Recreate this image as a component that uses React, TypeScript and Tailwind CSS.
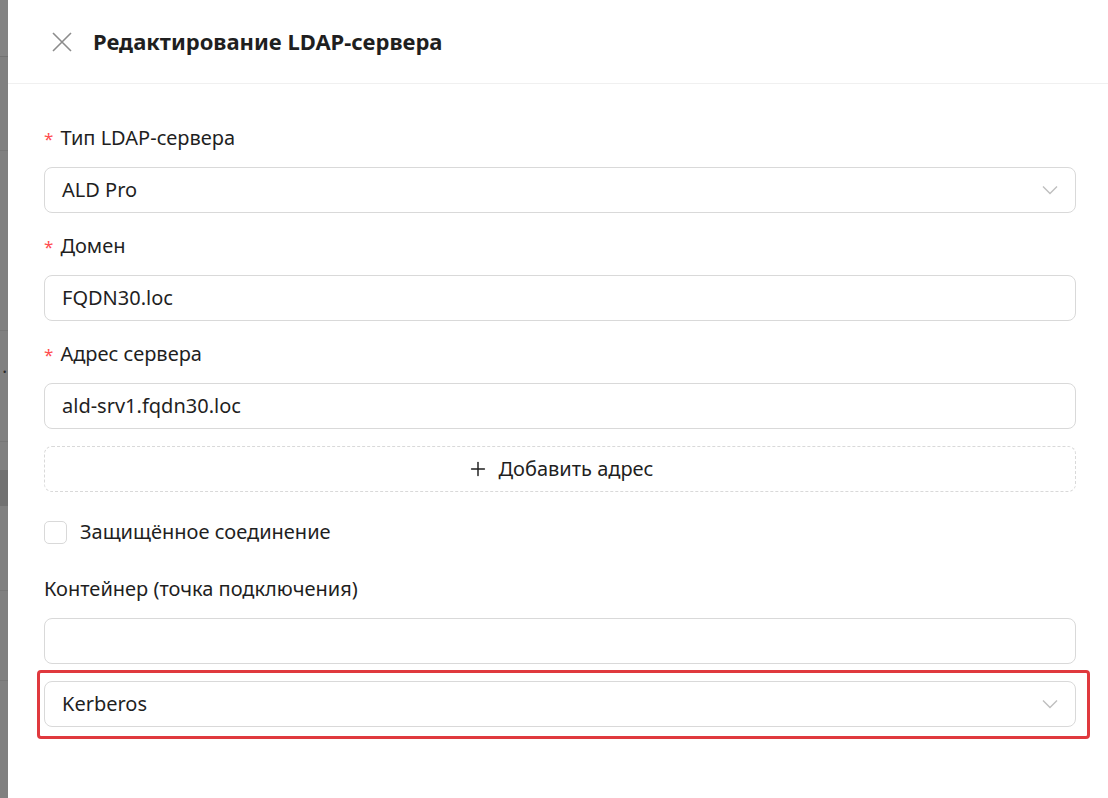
import { Plus } from 'lucide-react';

function Chevron() {
  return (
    <svg width="16" height="10" viewBox="0 0 16 10" fill="none" className="text-[#bfbfbf]">
      <path d="M1 1.5 L8 8.5 L15 1.5" stroke="currentColor" strokeWidth="1.4" />
    </svg>
  );
}

function Label({ text, required }: { text: string; required?: boolean }) {
  return (
    <div className="h-[40px] flex items-center text-[20px] text-[#1f1f1f]">
      {required && <span className="text-[#ff4d4f] mr-[7px] text-[17px] leading-none">*</span>}
      <span>{text}</span>
    </div>
  );
}

function Input({ value, select }: { value?: string; select?: boolean }) {
  return (
    <div className="h-[46px] border border-[#d9d9d9] rounded-[8px] bg-white flex items-center justify-between pl-[17px] pr-[17px] text-[20px] text-[#1f1f1f]">
      <span>{value}</span>
      {select && <Chevron />}
    </div>
  );
}

export default function App() {
  return (
    <div className="w-[1108px] h-[798px] flex overflow-hidden" style={{ fontFamily: '"Noto Sans", "Open Sans", sans-serif' }}>
      {/* masked page behind the drawer */}
      <div className="w-[8px] h-full bg-[#808080] flex flex-col overflow-hidden">
        <div className="h-[56px] bg-[#838383]" />
        <div className="h-[1px] bg-[#727272]" />
        <div className="h-[93px]" />
        <div className="h-[1px] bg-[#777777]" />
        <div className="h-[179px]" />
        <div className="h-[1px] bg-[#777777]" />
        <div className="h-[70px] flex items-center justify-end text-[18px] text-[#2a2a2a] leading-none">
          <span className="pr-[1px]">.</span>
        </div>
        <div className="h-[40px]" />
        <div className="h-[1px] bg-[#777777]" />
        <div className="h-[28px]" />
        <div className="h-[36px] bg-[#717171]" />
        <div className="h-[84px]" />
        <div className="h-[1px] bg-[#777777]" />
        <div className="h-[89px]" />
        <div className="h-[1px] bg-[#777777]" />
      </div>

      <div className="flex-1 h-full bg-white flex flex-col">
        <div className="h-[84px] border-b border-[#f0f0f0] flex items-center pl-[44px] gap-[21px] shrink-0">
          <svg width="20" height="20" viewBox="0 0 20 20" className="text-[#8c8c8c]">
            <path d="M1 1 L19 19 M19 1 L1 19" stroke="currentColor" strokeWidth="1.6" />
          </svg>
          <h1 className="text-[22px] font-bold text-[#1f1f1f]">Редактирование LDAP-сервера</h1>
        </div>

        <div className="pl-[36px] pr-[32px] pt-[34px]">
          <Label text="Тип LDAP-сервера" required />
          <div className="mt-[9px] mb-[13px]">
            <Input value="ALD Pro" select />
          </div>

          <Label text="Домен" required />
          <div className="mt-[9px] mb-[13px]">
            <Input value="FQDN30.loc" />
          </div>

          <Label text="Адрес сервера" required />
          <div className="mt-[9px]">
            <Input value="ald-srv1.fqdn30.loc" />
          </div>

          <div className="mt-[17px] h-[46px] border border-dashed border-[#d9d9d9] rounded-[8px] flex items-center justify-center gap-[10px] text-[20px] text-[#1f1f1f]">
            <Plus className="w-[22px] h-[22px]" strokeWidth={1.6} />
            <span>Добавить адрес</span>
          </div>

          <div className="mt-[28px] flex items-center gap-[13px] h-[24px]">
            <div className="w-[23px] h-[23px] border border-[#d9d9d9] rounded-[5px] bg-white" />
            <span className="text-[20px] text-[#1f1f1f]">Защищённое соединение</span>
          </div>

          <div className="mt-[25px]">
            <Label text="Контейнер (точка подключения)" />
          </div>
          <div className="mt-[9px]">
            <Input value="" />
          </div>

          <div className="mt-[17px] relative">
            <Input value="Kerberos" select />
            <div className="absolute -left-[7px] -right-[14px] -top-[11px] -bottom-[12px] border-[3px] border-[#e0393e] rounded-[4px] pointer-events-none" />
          </div>
        </div>
      </div>
    </div>
  );
}
